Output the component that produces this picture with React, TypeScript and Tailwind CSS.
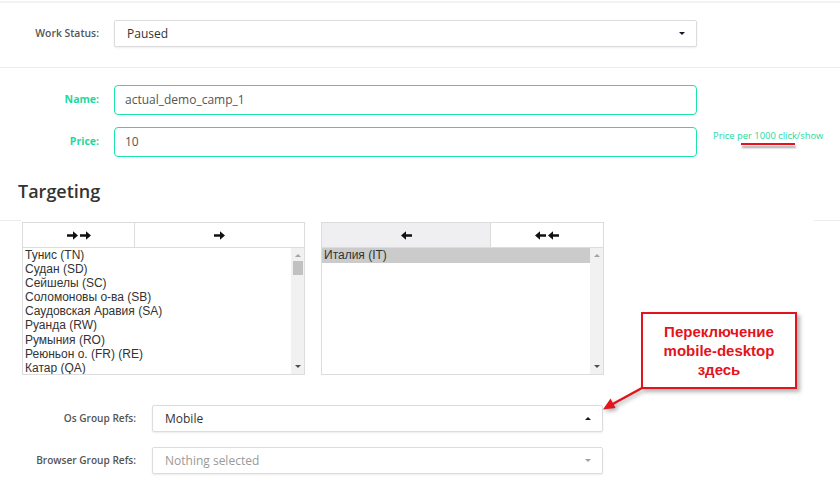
import type { ReactNode } from 'react';

const available = [
  'Тунис (TN)',
  'Судан (SD)',
  'Сейшелы (SC)',
  'Соломоновы о-ва (SB)',
  'Саудовская Аравия (SA)',
  'Руанда (RW)',
  'Румыния (RO)',
  'Реюньон о. (FR) (RE)',
  'Катар (QA)',
];

const chosen = ['Италия (IT)'];

function Arrow({ left = false }: { left?: boolean }) {
  return (
    <svg width="11" height="9" viewBox="0 0 11 9" className={left ? 'rotate-180' : ''}>
      <path d="M0 3.2h6V0.3L11 4.5 6 8.7V5.8H0z" fill="#111" />
    </svg>
  );
}

function Caret({ up = false, muted = false }: { up?: boolean; muted?: boolean }) {
  return (
    <span
      className={`block h-0 w-0 border-x-[3px] border-x-transparent ${
        up ? 'border-b-[3px]' : 'border-t-[3px]'
      } ${muted ? (up ? 'border-b-gray-400' : 'border-t-gray-400') : up ? 'border-b-gray-900' : 'border-t-gray-900'}`}
    />
  );
}

function Select({ value, placeholder, up, className }: { value?: string; placeholder?: string; up?: boolean; className: string }) {
  return (
    <div
      className={`flex items-center justify-between rounded-[2px] border border-[#dcdcdc] bg-white pl-[12px] pr-[11px] shadow-[0_1px_2px_rgba(0,0,0,0.08)] ${className}`}
    >
      <span className={`text-[12px] ${value ? 'text-[#333]' : 'text-[#999]'}`}>{value ?? placeholder}</span>
      <Caret up={up} muted={!value} />
    </div>
  );
}

function Scrollbar({ thumb }: { thumb: boolean }) {
  return (
    <div className="flex w-[13px] flex-col items-center bg-[#f1f1f1]">
      <div className="mt-[6px]">
        <span className="block h-0 w-0 border-x-[3px] border-b-[3px] border-x-transparent border-b-[#a3a3a3]" />
      </div>
      {thumb ? <div className="mt-[4px] h-[14px] w-[10px] bg-[#c1c1c1]" /> : null}
      <div className="mt-auto mb-[6px]">
        <span className="block h-0 w-0 border-x-[3px] border-t-[3px] border-x-transparent border-t-[#505050]" />
      </div>
    </div>
  );
}

function Dual({ first, second, firstWide }: { first: ReactNode; second: ReactNode; firstWide: boolean }) {
  return (
    <div className="flex h-[26px]">
      <button
        className={`flex items-center justify-center gap-[2px] border border-[#dcdcdc] ${
          firstWide ? 'w-[170px] bg-[#efeff1]' : 'w-[113px] bg-white'
        }`}
      >
        {first}
      </button>
      <button className="-ml-px flex flex-1 items-center justify-center gap-[2px] border border-[#dcdcdc] bg-white">
        {second}
      </button>
    </div>
  );
}

function ListBox({ items, selected, thumb }: { items: string[]; selected?: string; thumb: boolean }) {
  return (
    <div className="flex h-[127px] border border-t-0 border-[#dcdcdc] bg-white">
      <div className="flex-1 overflow-hidden font-['Liberation_Sans',Arial,sans-serif] text-[12px] leading-[14.1px] text-[#333]">
        {items.map((it) => (
          <div key={it} className={`pl-[2px] ${it === selected ? 'bg-[#cbcbcb] pb-[1px]' : ''}`}>
            {it}
          </div>
        ))}
      </div>
      <Scrollbar thumb={thumb} />
    </div>
  );
}

export default function App() {
  return (
    <div className="relative h-[498px] w-[840px] overflow-hidden bg-white font-['Open_Sans',sans-serif]">
      <div className="mt-[1px] h-[2px] bg-[#f2f2f2]" />

      <div className="flex items-center pt-[17px] pb-[20px]">
        <label className="w-[99px] text-right text-[10.4px] font-semibold text-[#555]">Work Status:</label>
        <Select value="Paused" className="ml-[15px] h-[27px] w-[583px]" />
      </div>

      <div className="h-px bg-[#ededed]" />

      <div className="flex flex-col gap-[12px] pt-[17px]">
        <div className="flex items-center">
          <label className="w-[99px] text-right text-[10.5px] font-bold text-[#1ed99c]">Name:</label>
          <div className="ml-[15px] flex h-[30px] w-[583px] items-center rounded-[4px] border-[1.5px] border-[#1ee3a6] px-[10px] text-[12px] text-[#555]">
            actual_demo_camp_1
          </div>
        </div>
        <div className="flex items-center">
          <label className="w-[99px] text-right text-[10.5px] font-bold text-[#1ed99c]">Price:</label>
          <div className="ml-[15px] flex h-[30px] w-[583px] items-center rounded-[4px] border-[1.5px] border-[#1ee3a6] px-[10px] text-[12px] text-[#555]">
            10
          </div>
          <div className="relative ml-[16px] -mt-[12px] text-[9.4px] text-[#1ed99c]">
            Price per 1000 click/show
            <span className="absolute left-[28px] top-[14px] h-[2px] w-[54px] bg-[#e4141c] shadow-[1px_3px_2px_rgba(0,0,0,0.35)]" />
          </div>
        </div>
      </div>

      <h2 className="mt-[22px] pl-[18px] text-[18px] font-semibold leading-[24px] text-[#333]">Targeting</h2>

      <div className="mt-[17px] flex h-px">
        <div className="w-[21px] bg-[#ededed]" />
        <div className="flex-1" />
        <div className="w-[26px] bg-[#ededed]" />
      </div>

      <div className="mt-[1px] flex gap-[16px] pl-[22px]">
        <div className="w-[283px]">
          <Dual
            firstWide={false}
            first={
              <>
                <Arrow />
                <Arrow />
              </>
            }
            second={<Arrow />}
          />
          <ListBox items={available} thumb />
        </div>
        <div className="w-[283px]">
          <Dual
            firstWide
            first={<Arrow left />}
            second={
              <>
                <Arrow left />
                <Arrow left />
              </>
            }
          />
          <ListBox items={chosen} selected="Италия (IT)" thumb={false} />
        </div>
      </div>

      <div className="mt-[30px] flex flex-col gap-[15px]">
        <div className="flex items-center">
          <label className="w-[136px] text-right text-[10.1px] font-semibold text-[#555]">Os Group Refs:</label>
          <Select value="Mobile" up className="ml-[16px] h-[27px] w-[451px]" />
        </div>
        <div className="flex items-center">
          <label className="w-[136px] text-right text-[10.1px] font-semibold text-[#555]">Browser Group Refs:</label>
          <Select placeholder="Nothing selected" className="ml-[16px] h-[27px] w-[451px]" />
        </div>
      </div>

      {/* callout pointing at the OS selector */}
      <div className="absolute left-[641px] top-[312px] flex h-[77px] w-[156px] flex-col items-center justify-center border-2 border-[#e3141b] bg-white font-['Liberation_Sans',Arial,sans-serif] text-[15px] font-bold leading-[19px] text-[#e3141b] shadow-[3px_3px_4px_rgba(0,0,0,0.3)]">
        <span>Переключение</span>
        <span>mobile-desktop</span>
        <span>здесь</span>
      </div>
      <svg className="absolute left-[596px] top-[380px]" width="60" height="40" viewBox="596 380 60 40">
        <g style={{ filter: 'drop-shadow(2px 2px 2px rgba(0,0,0,0.35))' }}>
          <line x1="642" y1="388" x2="610" y2="405.5" stroke="#e3141b" strokeWidth="2.5" />
          <polygon points="603,409.5 615.5,408 610.5,398.5" fill="#e3141b" />
        </g>
      </svg>
    </div>
  );
}
